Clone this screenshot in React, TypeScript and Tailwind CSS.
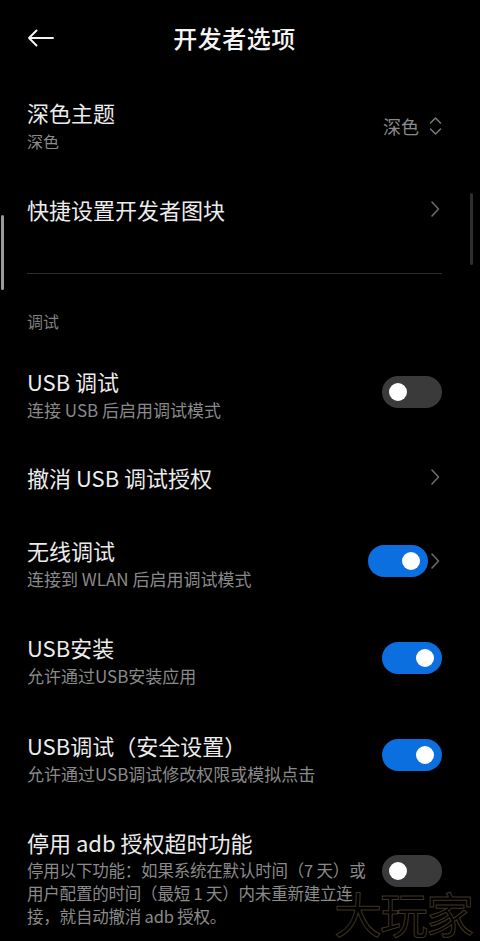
import React from "react";

const FONT = "font-['Noto_Sans_CJK_SC','Noto_Sans',sans-serif]";

function Chevron() {
  return (
    <svg width="10" height="18" viewBox="0 0 10 18" className="shrink-0">
      <path d="M2 2 L8.5 9 L2 16" fill="none" stroke="#6a6a6a" strokeWidth="1.6" strokeLinecap="round" strokeLinejoin="round" />
    </svg>
  );
}

function Toggle({ on }: { on: boolean }) {
  return (
    <div
      className={
        "w-[60px] h-[32px] rounded-full flex items-center shrink-0 " +
        (on ? "bg-[#0b6fdf] justify-end pr-[8px]" : "bg-[#3a3a3a] justify-start pl-[7px]")
      }
    >
      <div className="w-[18px] h-[18px] rounded-full bg-white" />
    </div>
  );
}

function TwoLine({ title, sub }: { title: string; sub: string }) {
  return (
    <div className="flex flex-col min-w-0">
      <div className="text-[22px] leading-[30px] text-[#ececec] whitespace-nowrap">{title}</div>
      <div className="text-[17px] leading-[28px] text-[#8a8a8a] whitespace-nowrap">{sub}</div>
    </div>
  );
}

export default function App() {
  return (
    <div className={"relative w-[480px] h-[941px] overflow-hidden bg-black " + FONT}>
      {/* Header */}
      <div className="h-[76px] flex items-center pl-[27px]">
        <svg width="27" height="18" viewBox="0 0 27 18" className="shrink-0">
          <path d="M26 9 H2 M9.5 1.5 L2 9 L9.5 16.5" fill="none" stroke="#f2f2f2" strokeWidth="2" strokeLinecap="round" strokeLinejoin="round" />
        </svg>
        <div className="flex-1 text-center text-[24px] leading-[32px] tracking-[0.5px] text-[#f4f4f4] font-medium">开发者选项</div>
        <div className="w-[65px] shrink-0" />
      </div>

      {/* 深色主题 */}
      <div className="h-[100px] flex items-center justify-between pl-[27px] pr-[38px]">
        <div className="flex flex-col">
          <div className="text-[22px] leading-[30px] text-[#ececec]">深色主题</div>
          <div className="text-[16px] leading-[28px] text-[#8a8a8a]">深色</div>
        </div>
        <div className="flex items-center gap-[10px]">
          <span className="text-[18px] leading-[26px] text-[#8a8a8a]">深色</span>
          <svg width="13" height="20" viewBox="0 0 13 20">
            <path d="M1.5 7 L6.5 2 L11.5 7 M1.5 13 L6.5 18 L11.5 13" fill="none" stroke="#7a7a7a" strokeWidth="1.5" strokeLinecap="round" strokeLinejoin="round" />
          </svg>
        </div>
      </div>

      {/* 快捷设置开发者图块 */}
      <div className="h-[66px] flex items-center justify-between pl-[27px] pr-[40px]">
        <div className="text-[22px] leading-[30px] text-[#ececec]">快捷设置开发者图块</div>
        <Chevron />
      </div>

      {/* Divider */}
      <div className="mt-[31px] ml-[27px] mr-[38px] h-px bg-[#2c2c2c]" />

      {/* Section header */}
      <div className="pt-[36px] pb-[14px] pl-[27px] text-[16px] leading-[22px] text-[#7e7e7e]">调试</div>

      {/* USB 调试 */}
      <div className="h-[98px] flex items-center justify-between pl-[27px] pr-[38px]">
        <TwoLine title="USB 调试" sub="连接 USB 后启用调试模式" />
        <div className="mb-[6px]">
          <Toggle on={false} />
        </div>
      </div>

      {/* 撤消 USB 调试授权 */}
      <div className="h-[66px] flex items-center justify-between pl-[27px] pr-[40px]">
        <div className="text-[22px] leading-[30px] text-[#ececec]">撤消 USB 调试授权</div>
        <Chevron />
      </div>

      {/* 无线调试 */}
      <div className="h-[108px] flex items-center justify-between pl-[27px] pr-[40px]">
        <TwoLine title="无线调试" sub="连接到 WLAN 后启用调试模式" />
        <div className="flex items-center gap-[2px] mb-[6px]">
          <Toggle on={true} />
          <Chevron />
        </div>
      </div>

      {/* USB安装 */}
      <div className="h-[86px] flex items-center justify-between pl-[27px] pr-[38px]">
        <TwoLine title="USB安装" sub="允许通过USB安装应用" />
        <div className="mb-[6px]">
          <Toggle on={true} />
        </div>
      </div>

      {/* USB调试（安全设置） */}
      <div className="h-[110px] flex items-center justify-between pl-[27px] pr-[38px]">
        <TwoLine title="USB调试（安全设置）" sub="允许通过USB调试修改权限或模拟点击" />
        <div className="mb-[8px]">
          <Toggle on={true} />
        </div>
      </div>

      {/* 停用 adb 授权超时功能 */}
      <div className="pt-[13px] flex items-center justify-between pl-[27px] pr-[38px]">
        <div className="flex flex-col">
          <div className="text-[22px] leading-[30px] text-[#ececec] whitespace-nowrap">停用 adb 授权超时功能</div>
          <div className="mt-[2px] text-[16.5px] leading-[23px] tracking-[-0.2px] text-[#8a8a8a] whitespace-nowrap">
            停用以下功能：如果系统在默认时间（7 天）或
            <br />
            用户配置的时间（最短 1 天）内未重新建立连
            <br />
            接，就自动撤消 adb 授权。
          </div>
        </div>
        <div className="mb-[14px]">
          <Toggle on={false} />
        </div>
      </div>

      {/* Scroll indicators */}
      <div className="absolute left-[1px] top-[215px] w-[3px] h-[75px] rounded-full bg-[#9a9a9a]" />
      <div className="absolute left-[470px] top-[193px] w-[3px] h-[72px] rounded-full bg-[#2e2e2e]" />

      {/* Watermark */}
      <div className="absolute left-[334px] top-[887px] text-[48px] leading-[50px] text-transparent [-webkit-text-stroke:1px_#3d3522] tracking-[-2px] pointer-events-none whitespace-nowrap">
        大玩家
      </div>
    </div>
  );
}
